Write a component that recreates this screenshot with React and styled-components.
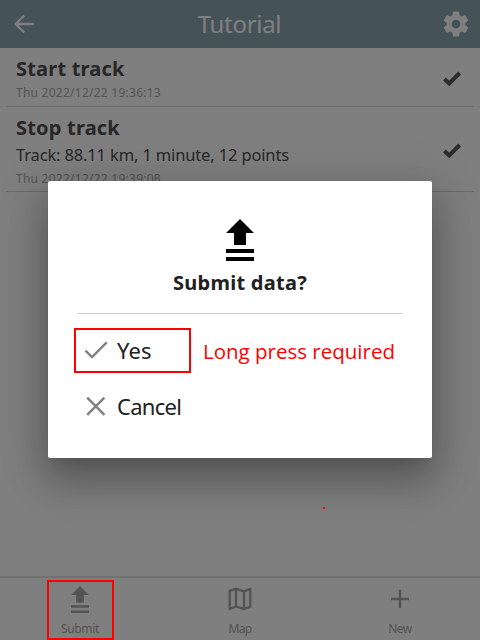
import React from 'react';
import styled, { createGlobalStyle } from 'styled-components';

const GlobalStyle = createGlobalStyle`
  * { box-sizing: border-box; }
  body { margin: 0; overflow: hidden; }
`;

const Screen = styled.div`
  position: relative;
  display: flex;
  flex-direction: column;
  width: 480px;
  height: 640px;
  background: #fff;
  color: #4e4e4e;
  font-family: 'Noto Sans', sans-serif;
`;

const Text = styled.span`
  display: block;
  margin: 0;
  white-space: nowrap;
  font-size: ${(p) => p.$size}px;
  line-height: ${(p) => p.$line}px;
  letter-spacing: ${(p) => p.$spacing || 0}px;
  font-weight: ${(p) => (p.$bold ? 700 : 400)};
  color: ${(p) => p.$color || 'inherit'};
`;

const Header = styled.header`
  display: flex;
  justify-content: space-between;
  align-items: center;
  height: 48px;
  padding: 0 9px 0 10px;
  background: #8ba4b0;
  color: #fff;
  svg { display: block; }
`;

const List = styled.main`
  flex: 1;
  padding: 0 6px;
`;

const Row = styled.article`
  display: flex;
  justify-content: space-between;
  align-items: center;
  height: ${(p) => p.$height}px;
  padding: 0 12px 0 10px;
  border-bottom: 1px solid #d6d6d6;
  svg { margin-top: 3px; }
`;

const RowText = styled.div`
  align-self: flex-start;
  padding-top: 9px;
`;

const Footer = styled.footer`
  display: grid;
  grid-template-columns: repeat(3, 1fr);
  height: 64px;
  border-top: 2px solid #e2e2e2;
  background: #fff;
  color: #a6a6a6;
`;

const Tab = styled.button`
  display: flex;
  flex-direction: column;
  align-items: center;
  padding: 6px 0 0;
  border: 0;
  background: none;
  color: inherit;
  font: inherit;
`;

const IconSlot = styled.span`
  display: flex;
  align-items: center;
  justify-content: center;
  height: 30px;
  margin-bottom: 6px;
`;

const Backdrop = styled.div`
  position: absolute;
  inset: 0;
  background: rgba(0, 0, 0, 0.5);
`;

const Dialog = styled.section`
  position: absolute;
  left: 48px;
  top: 181px;
  width: 384px;
  height: 277px;
  padding: 38px 30px 0;
  display: flex;
  flex-direction: column;
  background: #fff;
  border-radius: 2px;
  color: #212121;
  box-shadow: 0 9px 46px 8px rgba(0, 0, 0, 0.14), 0 11px 15px -7px rgba(0, 0, 0, 0.12),
    0 24px 38px 3px rgba(0, 0, 0, 0.2);
`;

const DialogHead = styled.div`
  display: flex;
  flex-direction: column;
  align-items: center;
  height: 95px;
  border-bottom: 1px solid #cbcbcb;
  svg { display: block; margin-bottom: 8px; color: #000; }
`;

const Option = styled.button`
  display: flex;
  align-items: center;
  gap: 9px;
  height: 44px;
  margin-top: ${(p) => p.$top}px;
  padding: 0 0 0 6px;
  border: 0;
  background: none;
  color: inherit;
  font: inherit;
  ${Text} { margin-bottom: 2px; }
`;

const Mark = styled.div`
  position: absolute;
  left: ${(p) => p.$x}px;
  top: ${(p) => p.$y}px;
  width: ${(p) => p.$w}px;
  height: ${(p) => p.$h}px;
  border: 2px solid #f00;
`;

const Dot = styled.div`
  position: absolute;
  left: 323px;
  top: 507px;
  width: 2px;
  height: 2px;
  background: #f00;
`;

const Note = styled.div`
  position: absolute;
  left: 203px;
  top: 337px;
  font-family: 'Open Sans', sans-serif;
  font-size: 20.5px;
  line-height: 28px;
  white-space: nowrap;
  color: #f00;
`;

const UploadIcon = ({ width, height }) => (
  <svg width={width} height={height} viewBox="0 0 28 42" preserveAspectRatio="none" fill="currentColor">
    <path d="M14 0 28 14H20V26H8V14H0ZM0 30H28V34H0ZM0 38H28V42H0Z" />
  </svg>
);

const BackIcon = () => (
  <svg width="28" height="28" viewBox="0 0 24 24" fill="currentColor">
    <path d="M20.5 11H7.3L12.9 5.4 11.5 4 3.5 12l8 8 1.4-1.4L7.3 13h13.2z" />
  </svg>
);

const GearIcon = () => (
  <svg width="30" height="30" viewBox="0 0 24 24" fill="currentColor">
    <path d="M19.43 12.98c.04-.32.07-.64.07-.98s-.03-.66-.07-.98l2.11-1.65c.19-.15.24-.42.12-.64l-2-3.46c-.12-.22-.39-.3-.61-.22l-2.49 1c-.52-.4-1.08-.73-1.69-.98l-.38-2.65C14.46 2.18 14.25 2 14 2h-4c-.25 0-.46.18-.49.42l-.38 2.65c-.61.25-1.17.59-1.69.98l-2.49-1c-.23-.09-.49 0-.61.22l-2 3.46c-.13.22-.07.49.12.64l2.11 1.65c-.04.32-.07.65-.07.98s.03.66.07.98l-2.11 1.65c-.19.15-.24.42-.12.64l2 3.46c.12.22.39.3.61.22l2.49-1c.52.4 1.08.73 1.69.98l.38 2.65c.03.24.24.42.49.42h4c.25 0 .46-.18.49-.42l.38-2.65c.61-.25 1.17-.59 1.69-.98l2.49 1c.23.09.49 0 .61-.22l2-3.46c.12-.22.07-.49-.12-.64zM12 15.5a3.5 3.5 0 1 1 0-7 3.5 3.5 0 0 1 0 7z" />
  </svg>
);

const DoneIcon = () => (
  <svg width="20" height="16" viewBox="0 0 20 16" fill="none" stroke="#5a5a5a" strokeWidth="4">
    <path d="M2.4 8 7.2 12.5 17.7 2" />
  </svg>
);

const CheckIcon = () => (
  <svg width="24" height="24" viewBox="0 0 24 24" fill="none" stroke="#808080" strokeWidth="2.4">
    <path d="M1.5 11.7 8 18 22.7 3.3" />
  </svg>
);

const CloseIcon = () => (
  <svg width="24" height="24" viewBox="0 0 24 24" fill="none" stroke="#808080" strokeWidth="2.4">
    <path d="M3.2 2.7 20.4 19.9M20.4 2.7 3.2 19.9" />
  </svg>
);

const MapIcon = () => (
  <svg width="24" height="24" viewBox="0 0 24 24" fill="none" stroke="currentColor" strokeWidth="2.3">
    <path d="M1.7 3.8 8 1.8 16 4.3 22.3 2V19.6L16 22 8 19.5 1.7 21.8ZM8 2V19.5M16 4.5V22" />
  </svg>
);

const PlusIcon = () => (
  <svg width="18" height="18" viewBox="0 0 18 18" fill="none" stroke="currentColor" strokeWidth="2.4">
    <path d="M9 0V18M0 9H18" />
  </svg>
);

export default function App() {
  return (
    <Screen>
      <GlobalStyle />
      <Header>
        <BackIcon />
        <Text as="h1" $size={24} $line={50} $spacing={-0.3}>Tutorial</Text>
        <GearIcon />
      </Header>
      <List>
        <Row $height={59}>
          <RowText>
            <Text $size={20} $line={24} $spacing={0.2} $bold>Start track</Text>
            <Text $size={12} $line={24} $spacing={0.25} $color="#a8a8a8">Thu 2022/12/22 19:36:13</Text>
          </RowText>
          <DoneIcon />
        </Row>
        <Row $height={85}>
          <RowText>
            <Text $size={20} $line={24} $spacing={0.2} $bold>Stop track</Text>
            <Text $size={16.5} $line={30} $spacing={-0.15}>Track: 88.11 km, 1 minute, 12 points</Text>
            <Text $size={12} $line={17} $spacing={0.25} $color="#a8a8a8">Thu 2022/12/22 19:39:08</Text>
          </RowText>
          <DoneIcon />
        </Row>
      </List>
      <Footer>
        <Tab>
          <IconSlot><UploadIcon width={18} height={27} /></IconSlot>
          <Text $size={12} $line={17} $spacing={-0.3}>Submit</Text>
        </Tab>
        <Tab>
          <IconSlot><MapIcon /></IconSlot>
          <Text $size={12} $line={17} $spacing={-0.7}>Map</Text>
        </Tab>
        <Tab>
          <IconSlot><PlusIcon /></IconSlot>
          <Text $size={12} $line={17} $spacing={-0.5}>New</Text>
        </Tab>
      </Footer>
      <Backdrop />
      <Dialog role="dialog">
        <DialogHead>
          <UploadIcon width={28} height={42} />
          <Text $size={20} $line={28} $spacing={0.28} $bold>Submit data?</Text>
        </DialogHead>
        <Option $top={15}>
          <CheckIcon />
          <Text $size={22} $line={28} $spacing={0.1}>Yes</Text>
        </Option>
        <Option $top={12}>
          <CloseIcon />
          <Text $size={22} $line={28} $spacing={-0.7}>Cancel</Text>
        </Option>
      </Dialog>
      <Mark $x={74} $y={328} $w={117} $h={45} />
      <Note>Long press required</Note>
      <Mark $x={47} $y={580} $w={67} $h={60} />
      <Dot />
    </Screen>
  );
}
